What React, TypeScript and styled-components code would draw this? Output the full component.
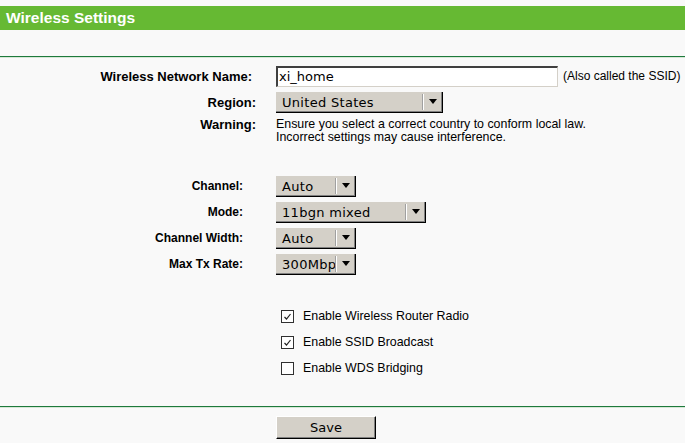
import styled, { createGlobalStyle } from "styled-components";

const GlobalStyle = createGlobalStyle`
  html, body {
    margin: 0;
    padding: 0;
    background: #f9f9f9;
  }
  body {
    font-family: "Liberation Sans", Arial, sans-serif;
    font-size: 12px;
    color: #000;
  }
`;

const Page = styled.div`
  width: 685px;
  height: 443px;
  padding-top: 6px;
  box-sizing: border-box;
  background: #f9f9f9;
  overflow: hidden;
`;

const Header = styled.div`
  height: 24px;
  line-height: 24px;
  padding-left: 6px;
  background: #66b933;
  color: #fff;
  font-weight: bold;
  font-size: 15.5px;
  margin-bottom: 26px;
`;

const Divider = styled.div`
  height: 1px;
  background: #1e7a3c;
  border-bottom: 1px solid #d6e8d6;
`;

const Form = styled.div<{ $top?: number }>`
  padding-top: ${(p) => p.$top ?? 0}px;
`;

const Row = styled.div<{ $gapAfter?: number; $align?: string }>`
  display: grid;
  grid-template-columns: 276px 1fr;
  align-items: ${(p) => p.$align ?? "center"};
  min-height: 26px;
  margin-bottom: ${(p) => p.$gapAfter ?? 0}px;
`;

const Label = styled.div<{ $pad: number; $top?: number; $size?: number }>`
  text-align: right;
  padding-right: ${(p) => p.$pad}px;
  padding-top: ${(p) => p.$top ?? 0}px;
  font-weight: bold;
  font-size: ${(p) => p.$size ?? 12}px;
  line-height: 15px;
`;

const Cell = styled.div`
  display: flex;
  align-items: center;
  gap: 5px;
`;

const TextInput = styled.div`
  width: 278px;
  height: 18px;
  line-height: 18px;
  padding-left: 1px;
  background: #fff;
  border-top: 2px solid #404040;
  border-left: 2px solid #404040;
  border-right: 1px solid #d4d0c8;
  border-bottom: 1px solid #d4d0c8;
  font-family: "DejaVu Sans", sans-serif;
  font-size: 13px;
  box-sizing: content-box;
`;

const Note = styled.span`
  font-size: 12px;
`;

const SelectBox = styled.div<{ $w: number }>`
  width: ${(p) => p.$w}px;
  height: 21px;
  box-sizing: border-box;
  display: flex;
  background: #d4d0c8;
  border-right: 1px solid #000;
  border-bottom: 1px solid #000;
  box-shadow: inset -1px -1px 0 #808080;
  font-family: "DejaVu Sans", sans-serif;
  font-size: 13px;
  letter-spacing: 0.3px;
`;

const SelectText = styled.div`
  flex: 1;
  overflow: hidden;
  white-space: nowrap;
  padding-left: 6px;
  line-height: 21px;
`;

const ArrowPart = styled.div`
  width: 17px;
  display: flex;
  align-items: center;
  justify-content: center;
  border-left: 1px solid #fff;
  box-shadow: -1px 0 0 #a0a0a0;
  margin: 2px 1px 2px 0;
`;

const Warning = styled.div<{ $top?: number }>`
  font-size: 12.4px;
  line-height: 13px;
  padding-top: ${(p) => p.$top ?? 0}px;
`;

const CheckRow = styled.div`
  display: flex;
  align-items: center;
  padding-left: 5px;
  gap: 9px;
  font-size: 12.4px;
`;

const CheckBox = styled.div`
  width: 11px;
  height: 11px;
  border: 1px solid #303030;
  background: #fff;
  display: flex;
  align-items: center;
  justify-content: center;
`;

const ButtonRow = styled.div`
  padding: 8px 0 0 276px;
`;

const Button = styled.div`
  width: 98px;
  height: 21px;
  line-height: 21px;
  text-align: center;
  background: #d4d0c8;
  border-top: 1px solid #fff;
  border-left: 1px solid #fff;
  border-right: 1px solid #000;
  border-bottom: 1px solid #000;
  box-shadow: inset -1px -1px 0 #808080;
  font-family: "DejaVu Sans", sans-serif;
  font-size: 13px;
`;

function Select({ value, width }: { value: string; width: number }) {
  return (
    <SelectBox $w={width}>
      <SelectText>{value}</SelectText>
      <ArrowPart>
        <svg width="8" height="5" viewBox="0 0 8 5">
          <path d="M0 0 H8 L4 5 Z" fill="#000" />
        </svg>
      </ArrowPart>
    </SelectBox>
  );
}

function Check({ checked, label }: { checked: boolean; label: string }) {
  return (
    <CheckRow>
      <CheckBox>
        {checked && (
          <svg width="9" height="9" viewBox="0 0 9 9">
            <path d="M1.5 5 L3.5 7 L7.5 2" stroke="#222" strokeWidth="1.2" fill="none" />
          </svg>
        )}
      </CheckBox>
      <span>{label}</span>
    </CheckRow>
  );
}

export default function App() {
  return (
    <Page>
      <GlobalStyle />
      <Header>Wireless Settings</Header>
      <Divider />
      <Form $top={5}>
        <Row>
          <Label $pad={24} $size={13}>Wireless Network Name:</Label>
          <Cell>
            <TextInput>xi_home</TextInput>
            <Note>(Also called the SSID)</Note>
          </Cell>
        </Row>
        <Row>
          <Label $pad={20} $size={13}>Region:</Label>
          <Cell>
            <Select value="United States" width={167} />
          </Cell>
        </Row>
        <Row $align="start" $gapAfter={29}>
          <Label $pad={20} $top={2} $size={13}>
            Warning:
          </Label>
          <Warning $top={3}>
            Ensure you select a correct country to conform local law.
            <br />
            Incorrect settings may cause interference.
          </Warning>
        </Row>
        <Row>
          <Label $pad={33}>Channel:</Label>
          <Cell>
            <Select value="Auto" width={80} />
          </Cell>
        </Row>
        <Row>
          <Label $pad={33}>Mode:</Label>
          <Cell>
            <Select value="11bgn mixed" width={150} />
          </Cell>
        </Row>
        <Row>
          <Label $pad={33}>Channel Width:</Label>
          <Cell>
            <Select value="Auto" width={80} />
          </Cell>
        </Row>
        <Row $gapAfter={26}>
          <Label $pad={33}>Max Tx Rate:</Label>
          <Cell>
            <Select value="300Mbps" width={80} />
          </Cell>
        </Row>
        <Row>
          <div />
          <Check checked label="Enable Wireless Router Radio" />
        </Row>
        <Row>
          <div />
          <Check checked label="Enable SSID Broadcast" />
        </Row>
        <Row $gapAfter={25}>
          <div />
          <Check checked={false} label="Enable WDS Bridging" />
        </Row>
      </Form>
      <Divider />
      <ButtonRow>
        <Button>Save</Button>
      </ButtonRow>
    </Page>
  );
}
